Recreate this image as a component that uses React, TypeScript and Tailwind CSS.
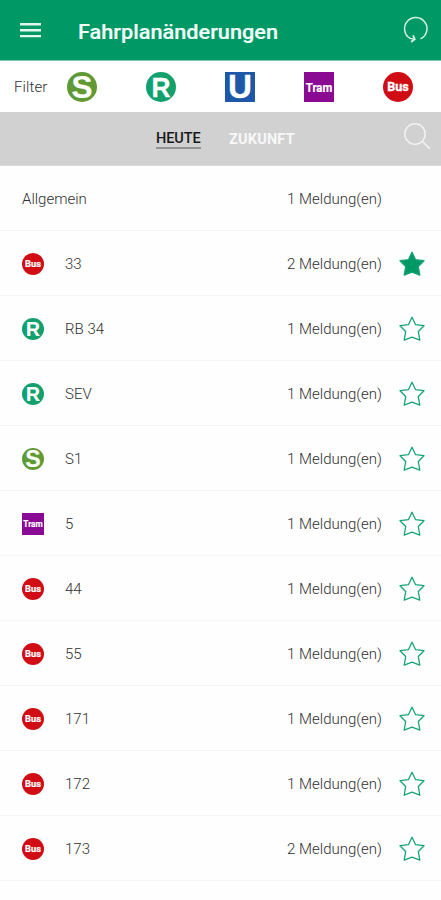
type Kind = 'S' | 'R' | 'U' | 'Tram' | 'Bus';

const fills: Record<Kind, string> = {
  S: '#5f9a35',
  R: '#12a06c',
  U: '#1c57a8',
  Tram: '#8a0a94',
  Bus: '#d00d15',
};

const letters: Record<Kind, { size: number; y: number; width: number; stroke: number; font: string }> = {
  S: { size: 32, y: 26.3, width: 21, stroke: 0.2, font: 'Liberation Sans, sans-serif' },
  R: { size: 28, y: 24.8, width: 19, stroke: 0.3, font: 'Liberation Sans, sans-serif' },
  U: { size: 33, y: 26.3, width: 24, stroke: 0.3, font: 'Liberation Sans, sans-serif' },
  Tram: { size: 12.5, y: 19.6, width: 26.5, stroke: 0.2, font: 'Roboto, sans-serif' },
  Bus: { size: 12, y: 19.2, width: 21.5, stroke: 0.3, font: 'Roboto, sans-serif' },
};

function Badge({ kind, className }: { kind: Kind; className: string }) {
  const l = letters[kind];
  return (
    <svg viewBox="0 0 30 30" overflow="visible" className={className}>
      {kind === 'U' || kind === 'Tram' ? (
        <rect width="30" height="30" fill={fills[kind]} />
      ) : (
        <circle cx="15" cy="15" r="15" fill={fills[kind]} />
      )}
      <text
        x={15 - l.width / 2}
        y={l.y}
        textLength={l.width}
        lengthAdjust="spacingAndGlyphs"
        fontFamily={l.font}
        fontWeight="700"
        fontSize={l.size}
        fill="#fff"
        stroke="#fff"
        strokeWidth={l.stroke}
      >
        {kind}
      </text>
    </svg>
  );
}

function Star({ filled }: { filled?: boolean }) {
  return (
    <svg viewBox="0 0 26 26" className="h-[26px] w-[26px]">
      <path
        d="M13 1.3L16.6 8.7L25 9.7L19.3 15.5L20.8 24.2L13 21.2L5.2 24.2L6.7 15.5L1 9.7L9.4 8.7Z"
        fill={filled ? '#009865' : 'none'}
        stroke="#16a477"
        strokeWidth="1.3"
        strokeLinejoin="round"
      />
    </svg>
  );
}

const rows: { kind?: Kind; name: string; count: number; fav?: boolean }[] = [
  { name: 'Allgemein', count: 1 },
  { kind: 'Bus', name: '33', count: 2, fav: true },
  { kind: 'R', name: 'RB 34', count: 1 },
  { kind: 'R', name: 'SEV', count: 1 },
  { kind: 'S', name: 'S1', count: 1 },
  { kind: 'Tram', name: '5', count: 1 },
  { kind: 'Bus', name: '44', count: 1 },
  { kind: 'Bus', name: '55', count: 1 },
  { kind: 'Bus', name: '171', count: 1 },
  { kind: 'Bus', name: '172', count: 1 },
  { kind: 'Bus', name: '173', count: 2 },
];

const filters: Kind[] = ['S', 'R', 'U', 'Tram', 'Bus'];

export default function App() {
  return (
    <div className="flex h-[900px] w-[441px] flex-col overflow-hidden bg-[#fefefe] font-['Roboto',sans-serif] text-[#303030]">
      <header className="flex h-[61px] shrink-0 items-center border-b border-[#7fc7ae] bg-[#009865] pr-3 pl-5">
        <svg viewBox="0 0 21 16" className="h-4 w-[21px]" stroke="#e4f7ee" strokeWidth="2.4">
          <path d="M0 2.3h21M0 8.2h21M0 14.1h21" />
        </svg>
        <h1 className="ml-[37px] pt-[3px] text-[21px] leading-6 font-medium text-[#f2fff9]">
          <svg className="block h-6 w-[201px] overflow-visible" fill="currentColor">
            <text x="0" y="19" textLength="200" lengthAdjust="spacingAndGlyphs" stroke="currentColor" strokeWidth="0.2">
              Fahrplanänderungen
            </text>
          </svg>
        </h1>
        <svg viewBox="0 0 26 28" className="ml-auto h-7 w-[26px]" fill="none" stroke="#d3f2e4" strokeWidth="1.5">
          <path d="M17.6 22.8A11.2 11.2 0 1 0 7.2 22.4L11.4 23.3" />
          <path d="M10 19.4L11.8 23.3L8 26" strokeWidth="1.8" />
        </svg>
      </header>

      <div className="flex h-[51px] shrink-0 items-center bg-white pl-[14px]">
        <span className="w-[53px] pt-px text-[15px] font-light tracking-[0.1px]">Filter</span>
        <div className="flex gap-[49px]">
          {filters.map((k) => (
            <Badge key={k} kind={k} className="h-[30px] w-[30px]" />
          ))}
        </div>
      </div>

      <div className="flex h-[54px] shrink-0 items-center border-b border-[#dcdcdc] bg-[#d1d1d1] pr-[10px] pl-[156px] text-[14.5px] leading-[18px]">
        <span className="mt-px w-[45px] border-b-2 border-[#929292] pt-0.5 leading-4 font-medium tracking-[-0.1px] whitespace-nowrap text-[#181818]">
          HEUTE
        </span>
        <span className="mt-0.5 ml-[28px] font-bold tracking-[0.2px] text-[#f8f8f8]">ZUKUNFT</span>
        <svg
          viewBox="0 0 28 28"
          className="mb-1.5 ml-auto h-7 w-7"
          fill="none"
          stroke="#f2f2f2"
          strokeWidth="1.5"
          strokeLinecap="round"
        >
          <circle cx="12" cy="12" r="10.2" />
          <path d="M19.4 19.4L26.5 26.5" />
        </svg>
      </div>

      <ul>
        {rows.map((r) => (
          <li
            key={r.name}
            className="flex h-[65px] items-center border-b border-[#f5f5f5] pt-0.5 pr-4 pl-[22px] text-[15px] leading-5 font-light"
          >
            {r.kind && <Badge kind={r.kind} className="mr-[21px] mb-px h-[22px] w-[22px]" />}
            <span>{r.name}</span>
            <span className="ml-auto">{r.count} Meldung(en)</span>
            <span className="ml-[17px] h-[26px] w-[26px]">{r.kind && <Star filled={r.fav} />}</span>
          </li>
        ))}
      </ul>
    </div>
  );
}
